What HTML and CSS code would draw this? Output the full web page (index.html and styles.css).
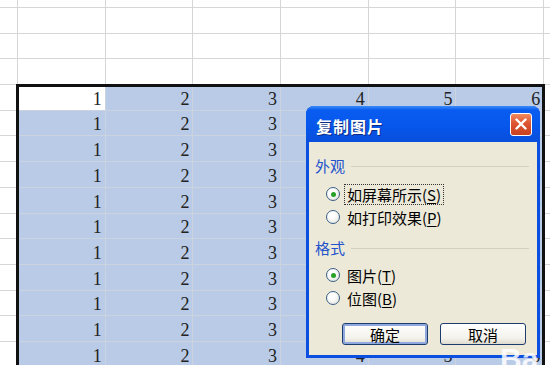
FILE: index.html
```html
<!DOCTYPE html>
<html lang="zh-CN">

<head>
  <meta charset="UTF-8" />
  <title>复制图片</title>
  <link rel="stylesheet" href="styles.css">
</head>

<body>
  <main class="sheet">
    <!-- 표格 -->
    <div class="row top"><i class="cell head"></i><i class="cell"></i><i class="cell"></i><i class="cell"></i><i class="cell"></i><i class="cell"></i><i class="cell"></i><i class="cell"></i></div>
    <div class="row"><i class="cell head"></i><i class="cell"></i><i class="cell"></i><i class="cell"></i><i class="cell"></i><i class="cell"></i><i class="cell"></i><i class="cell"></i></div>
    <div class="row"><i class="cell head"></i><i class="cell"></i><i class="cell"></i><i class="cell"></i><i class="cell"></i><i class="cell"></i><i class="cell"></i><i class="cell"></i></div>
    <div class="row"><i class="cell head"></i><i class="cell"></i><i class="cell"></i><i class="cell"></i><i class="cell"></i><i class="cell"></i><i class="cell"></i><i class="cell"></i></div>
    <div class="row"><i class="cell head"></i><i class="cell active">1</i><i class="cell sel">2</i><i class="cell sel">3</i><i class="cell sel">4</i><i class="cell sel">5</i><i class="cell sel">6</i><i class="cell"></i></div>
    <div class="row"><i class="cell head"></i><i class="cell sel">1</i><i class="cell sel">2</i><i class="cell sel">3</i><i class="cell sel">4</i><i class="cell sel">5</i><i class="cell sel">6</i><i class="cell"></i></div>
    <div class="row"><i class="cell head"></i><i class="cell sel">1</i><i class="cell sel">2</i><i class="cell sel">3</i><i class="cell sel">4</i><i class="cell sel">5</i><i class="cell sel">6</i><i class="cell"></i></div>
    <div class="row"><i class="cell head"></i><i class="cell sel">1</i><i class="cell sel">2</i><i class="cell sel">3</i><i class="cell sel">4</i><i class="cell sel">5</i><i class="cell sel">6</i><i class="cell"></i></div>
    <div class="row"><i class="cell head"></i><i class="cell sel">1</i><i class="cell sel">2</i><i class="cell sel">3</i><i class="cell sel">4</i><i class="cell sel">5</i><i class="cell sel">6</i><i class="cell"></i></div>
    <div class="row"><i class="cell head"></i><i class="cell sel">1</i><i class="cell sel">2</i><i class="cell sel">3</i><i class="cell sel">4</i><i class="cell sel">5</i><i class="cell sel">6</i><i class="cell"></i></div>
    <div class="row"><i class="cell head"></i><i class="cell sel">1</i><i class="cell sel">2</i><i class="cell sel">3</i><i class="cell sel">4</i><i class="cell sel">5</i><i class="cell sel">6</i><i class="cell"></i></div>
    <div class="row"><i class="cell head"></i><i class="cell sel">1</i><i class="cell sel">2</i><i class="cell sel">3</i><i class="cell sel">4</i><i class="cell sel">5</i><i class="cell sel">6</i><i class="cell"></i></div>
    <div class="row"><i class="cell head"></i><i class="cell sel">1</i><i class="cell sel">2</i><i class="cell sel">3</i><i class="cell sel">4</i><i class="cell sel">5</i><i class="cell sel">6</i><i class="cell"></i></div>
    <div class="row"><i class="cell head"></i><i class="cell sel">1</i><i class="cell sel">2</i><i class="cell sel">3</i><i class="cell sel">4</i><i class="cell sel">5</i><i class="cell sel">6</i><i class="cell"></i></div>
    <div class="row"><i class="cell head"></i><i class="cell sel">1</i><i class="cell sel">2</i><i class="cell sel">3</i><i class="cell sel">4</i><i class="cell sel">5</i><i class="cell sel">6</i><i class="cell"></i></div>

    <!-- 선택영역 테두리 -->
    <div class="selbox"></div>

    <!-- 대화상자 -->
    <section class="dialog">
      <div class="titlebar">
        <span class="title">复制图片</span>
        <span class="close">
          <svg width="12" height="12" viewBox="0 0 12 12">
            <path d="M1.5 1.5 L10.5 10.5 M10.5 1.5 L1.5 10.5" stroke="#fff" stroke-width="2.4" stroke-linecap="round" />
          </svg>
        </span>
      </div>
      <div class="dbody">
        <div class="group"><span>外观</span><i class="rule"></i></div>
        <div class="opt first"><span class="radio on"></span><span class="txt focus">如屏幕所示(<u>S</u>)</span></div>
        <div class="opt"><span class="radio"></span><span class="txt">如打印效果(<u>P</u>)</span></div>

        <div class="group second"><span>格式</span><i class="rule"></i></div>
        <div class="opt first2"><span class="radio on"></span><span class="txt">图片(<u>T</u>)</span></div>
        <div class="opt"><span class="radio"></span><span class="txt">位图(<u>B</u>)</span></div>

        <div class="buttons">
          <span class="btn default">确定</span>
          <span class="btn">取消</span>
        </div>
      </div>
    </section>

    <span class="mark">Ba</span>
  </main>
</body>

</html>
```

FILE: styles.css
```css
/* 초기화 */
html,
body {
  margin: 0;
  padding: 0;
}

body {
  background: #fff;
}

/* 시트 */
.sheet {
  position: relative;
  width: 550px;
  height: 365px;
  overflow: hidden;
  background: #fff;
}

.row {
  display: flex;
  height: 25.7px;
}

.row.top {
  height: 8px;
}

.cell {
  flex: none;
  box-sizing: border-box;
  width: 87.7px;
  border-right: 1px solid #d6d6d6;
  border-bottom: 1px solid #d6d6d6;
  display: flex;
  align-items: flex-end;
  justify-content: flex-end;
  padding: 0 3px 2px 0;
  font-style: normal;
  font-family: "Liberation Serif", serif;
  font-size: 18px;
  line-height: 1;
  color: #222;
}

.cell.head {
  width: 18px;
}

/* 선택된 셀 */
.cell.sel {
  background-color: #b9cbe6;
  border-color: #cbd3df;
}

.cell.active {
  border-color: #cbd3df;
}

.selbox {
  position: absolute;
  left: 16px;
  top: 84px;
  width: 529px;
  height: 320px;
  box-sizing: border-box;
  border: 3px solid #111;
}

/* 대화상자 */
.dialog {
  position: absolute;
  left: 306px;
  top: 106px;
  width: 234px;
  height: 252px;
  box-sizing: border-box;
  padding: 0 3px 3px;
  background: #0b4fe0;
  border-radius: 8px 8px 0 0;
  display: flex;
  flex-direction: column;
  font-family: "Noto Sans CJK SC", sans-serif;
}

.titlebar {
  flex: none;
  height: 36px;
  margin: 0 -3px;
  padding: 0 8px 0 10px;
  display: flex;
  align-items: center;
  justify-content: space-between;
  border-radius: 8px 8px 0 0;
  background: linear-gradient(#3b8cf7 0, #0a5cf0 4px, #0656ea 60%, #0a4fdc 100%);
}

.title {
  padding-top: 3px;
  color: #fff;
  font-size: 16px;
  font-weight: bold;
  letter-spacing: 1px;
  text-shadow: 1px 1px 0 #0b2a80;
}

.close {
  width: 22px;
  height: 23px;
  box-sizing: border-box;
  border: 1px solid #fff;
  border-radius: 3px;
  background: linear-gradient(#f08a5e, #dd5433 45%, #c8411f);
  display: flex;
  align-items: center;
  justify-content: center;
}

.dbody {
  flex: 1;
  background: #ece9d8;
  padding: 13px 8px 0 6px;
  font-size: 15px;
  color: #000;
}

.group {
  display: flex;
  align-items: center;
  height: 20px;
  color: #2352cc;
}

.group .rule {
  flex: 1;
  height: 1px;
  margin: 2px 0 0 6px;
  background: #d3d0c0;
}

.group.second {
  margin-top: 9px;
}

.opt {
  display: flex;
  align-items: center;
  height: 22px;
  margin-top: 1px;
  padding-left: 11px;
}

.opt.first {
  margin-top: 8px;
}

.opt.first2 {
  margin-top: 7px;
}

.radio {
  flex: none;
  width: 14px;
  height: 14px;
  box-sizing: border-box;
  border: 1px solid #3a5f86;
  border-radius: 50%;
  background: radial-gradient(circle at 40% 35%, #fff 30%, #dcdcd4 100%);
  display: flex;
  align-items: center;
  justify-content: center;
  margin-right: 4px;
}

.radio.on::after {
  content: '';
  width: 5px;
  height: 5px;
  border-radius: 50%;
  background: #27a127;
}

.txt {
  border: 1px dotted transparent;
  padding: 0 2px;
  line-height: 19px;
}

.txt.focus {
  border-color: #333;
}

.txt u {
  text-underline-offset: 2px;
}

/* 버튼 */
.buttons {
  display: flex;
  gap: 12px;
  margin-top: 14px;
  padding-left: 27px;
}

.btn {
  width: 86px;
  height: 22px;
  box-sizing: border-box;
  border: 1px solid #1c3c6e;
  border-radius: 3px;
  background: linear-gradient(#fff, #f3f2ec 70%, #dedbd0);
  display: flex;
  align-items: center;
  justify-content: center;
  font-size: 15px;
  line-height: 1;
}

.btn.default {
  box-shadow: inset 0 0 0 2px #8fa9e0;
}

/* 워터마크 */
.mark {
  position: absolute;
  left: 500px;
  top: 342px;
  font-family: "Liberation Sans", sans-serif;
  font-size: 30px;
  font-weight: bold;
  color: rgba(255, 255, 255, 0.85);
}
```
